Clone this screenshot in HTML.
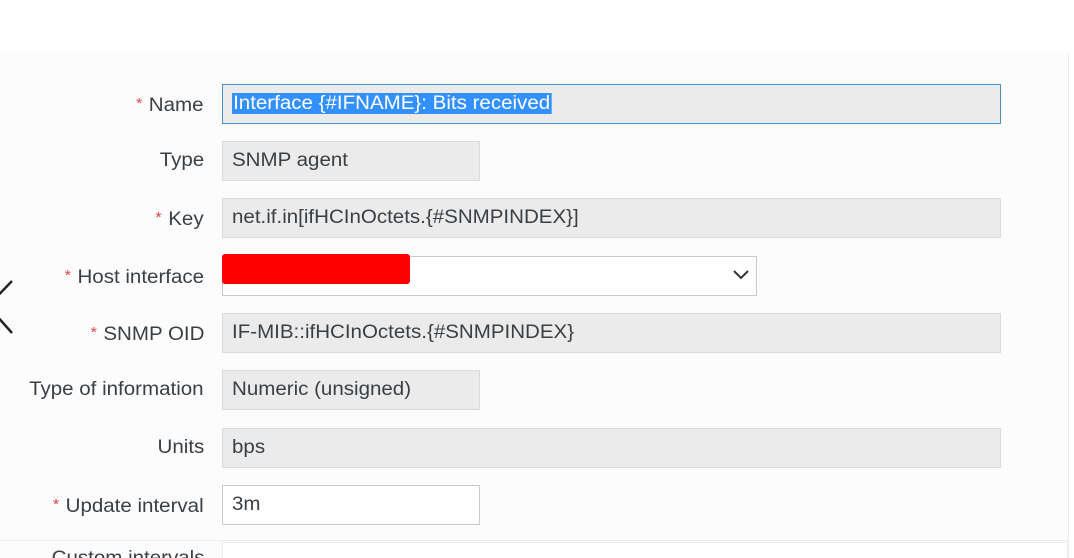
<!DOCTYPE html>
<html style="overflow:hidden;height:558px"><head><style>
body{margin:0;width:1074px;height:558px;overflow:hidden;background:#fff;font-family:"Liberation Sans",sans-serif}
#w{position:relative;width:1074px;height:558px;overflow:hidden}
.panel{position:absolute;left:0;top:53px;width:1068px;height:505px;background:#fcfcfc;border-right:1px solid #ebebeb}
.hl{position:absolute;left:0;top:540px;width:1068px;height:1px;background:#eee}
.lbl{position:absolute;right:870px;font-size:19px;color:#3a3f44;white-space:nowrap;line-height:40px;transform:scaleX(1.08);transform-origin:right center}
.lbl b{color:#e04545;font-weight:normal;font-size:15px;vertical-align:3px;margin-right:6px}
.f{position:absolute;left:222px;background:#ebebeb;border:1px solid #d9dcdf;font-size:19px;color:#3a3f44;line-height:38px;padding-left:9px;box-sizing:border-box;height:40px;white-space:nowrap}
.f span.t{display:inline-block;transform:scaleX(1.08);transform-origin:left center}
</style></head><body><div id="w">
<div class="panel"></div><div class="hl"></div>
<svg style="position:absolute;left:0;top:275px" width="20" height="65"><polyline points="12,6 -12,31 12,58" fill="none" stroke="#222" stroke-width="2.5"/></svg>
<div class="lbl" style="top:84px"><b>*</b>Name</div>
<div class="f" style="top:84px;width:779px;border-color:#4f8fc6"><span class="t"><span style="background:#3390ff;color:#fff;padding:0 1px">Interface {#IFNAME}: Bits received</span></span></div>
<div class="lbl" style="top:141px">Type</div>
<div class="f" style="top:141px;width:258px"><span class="t">SNMP agent</span></div>
<div class="lbl" style="top:198px"><b>*</b>Key</div>
<div class="f" style="top:198px;width:779px"><span class="t">net.if.in[ifHCInOctets.{#SNMPINDEX}]</span></div>
<div class="lbl" style="top:256px"><b>*</b>Host interface</div>
<div class="f" style="top:256px;width:535px;background:#fff;border-color:#c6ccd1"></div>
<div style="position:absolute;left:222px;top:254px;width:188px;height:30px;background:#f00;border-radius:3px"></div>
<svg style="position:absolute;left:733px;top:269px" width="16" height="12"><polyline points="1,2 8,9 15,2" fill="none" stroke="#333" stroke-width="2"/></svg>
<div class="lbl" style="top:313px"><b>*</b>SNMP OID</div>
<div class="f" style="top:313px;width:779px"><span class="t">IF-MIB::ifHCInOctets.{#SNMPINDEX}</span></div>
<div class="lbl" style="top:370px">Type of information</div>
<div class="f" style="top:370px;width:258px"><span class="t">Numeric (unsigned)</span></div>
<div class="lbl" style="top:428px">Units</div>
<div class="f" style="top:428px;width:779px"><span class="t">bps</span></div>
<div class="lbl" style="top:485px"><b>*</b>Update interval</div>
<div class="f" style="top:485px;width:258px;background:#fff;border-color:#c6ccd1"><span class="t">3m</span></div>
<div class="lbl" style="top:539px">Custom intervals</div>
<div style="position:absolute;left:222px;top:542px;width:846px;height:16px;background:#fff;border:1px solid #eee;border-bottom:0;box-sizing:border-box"></div>
</div></body></html>
